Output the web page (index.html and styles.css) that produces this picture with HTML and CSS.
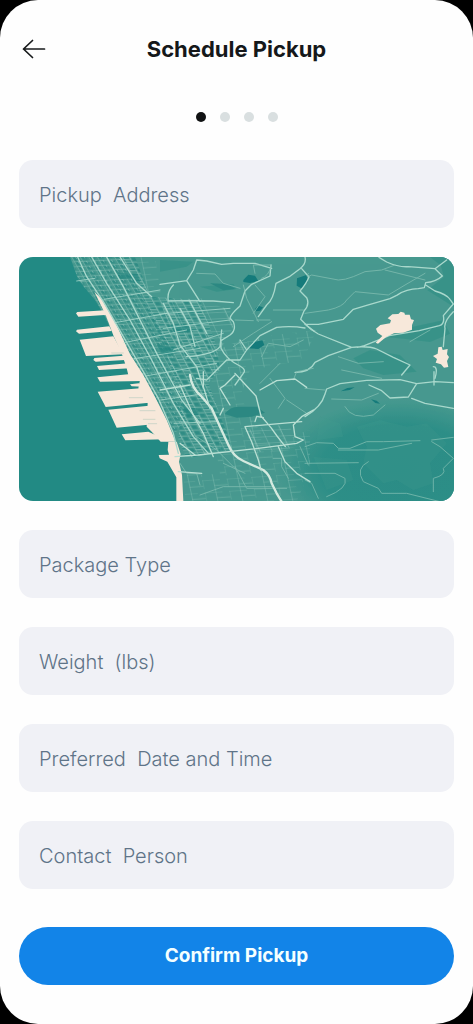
FILE: index.html
```html
<!DOCTYPE html>
<html lang="en">
<head>
<meta charset="utf-8">
<meta name="viewport" content="width=device-width, initial-scale=1">
<title>Schedule Pickup</title>
<link rel="stylesheet" href="styles.css">
</head>
<body>
<main class="screen">
  <header class="topbar">
    <button class="back" type="button" aria-label="Back">
      <svg viewBox="0 0 24 24" aria-hidden="true"><path d="M22.500 12H1.500M10.500 3.500 1.500 12l9 8.500"/></svg>
    </button>
    <h1 class="title">Schedule Pickup</h1>
  </header>
  <ol class="steps" aria-label="Step 1 of 4">
    <li class="step step-current"></li><li class="step"></li><li class="step"></li><li class="step"></li>
  </ol>
  <form class="form">
    <input class="field" type="text" aria-label="Pickup Address" placeholder="Pickup  Address">
    <svg class="map" viewBox="57 771 1305 732" role="img" aria-label="Pickup area map">
      <defs>
        <pattern id="dense" width="25" height="15" patternUnits="userSpaceOnUse" patternTransform="rotate(-3) skewX(27)">
          <path class="block" d="M4 3h14v8H4z"/><path class="lane" d="M0 0H25M0 0V15M13 0V7"/>
        </pattern>
        <pattern id="grid" width="43" height="17" patternUnits="userSpaceOnUse" patternTransform="rotate(-2) skewX(26)">
          <path class="block" d="M4 3h15v5H4zM25 4h14v10H25z"/><path class="lane" d="M0 0H43M0 0V17M22 0V17M0 9H20"/>
        </pattern>
        <pattern id="rows" width="90" height="19" patternUnits="userSpaceOnUse" patternTransform="rotate(-3) skewX(22)">
          <path class="lane" d="M0 0H90M0 0V19M55 0V19"/>
        </pattern>
        <pattern id="faint" width="74" height="37" patternUnits="userSpaceOnUse" patternTransform="rotate(-4) skewX(8)">
          <path class="faint-lane" d="M0 0H52M0 0V25M34 0V37M34 18H74"/>
        </pattern>
        <radialGradient id="shade" cx=".6" cy=".6" r=".55">
          <stop offset="0" stop-color="#2b8d86"/><stop offset=".65" stop-color="#2b8d86" stop-opacity=".9"/><stop offset="1" stop-color="#2b8d86" stop-opacity="0"/>
        </radialGradient>
      </defs>
      <path class="water" d="M57 771H1362V1503H57z"/>
      <path class="land" d="M210 771 235 840 285 900 315 950 365 1060 425 1130 465 1185 495 1255 530 1355 540 1415 545 1503H1362V771z"/>
      <!-- parks and hills -->
      <path class="hill" d="M480 815 560 800 580 785 480 780zM600 860l100-8 10 15-60 8zM1150 1010l60-24 120-25 20 40-60 25-80-10zM1060 1075l50-25 90 15 50 50-100 10-60-20zM1290 771h72v150l-80-50 50-40-10-35z"/>
      <ellipse fill="url(#shade)" cx="1130" cy="1370" rx="330" ry="190"/>
      <path class="ridge" d="M1070 1280l70-20 80 20 60-10 60 60-50 60 10 60-60 20-50-30-40 10-60-60 10-50zM940 1370l100 10 20 60-80 30zM960 1250l60 20 10 40-80 10z"/>
      <!-- street blocks -->
      <path fill="url(#dense)" d="M212 771H370L440 900 500 1000 535 1130 555 1260 525 1300 495 1235 425 1130 365 1060 315 950 285 900 235 840z"/>
      <path fill="url(#grid)" d="M365 771H405L450 890 600 900 650 1040 660 1110 625 1150 700 1350 560 1375 535 1320 545 1220 500 1060 430 900z"/>
      <path fill="url(#rows)" d="M480 900 610 895 620 905 690 930 700 980 665 1045 745 1010 735 1055 650 1070 540 1080zM735 1290l130-18 35 65-60 15-80 5z"/>
      <path fill="url(#faint)" d="M405 771h60l20 130-50-10zM640 1050l140-40 170-20-40 90-160 30-30 80 80 140 130-40 0 120-60 143H560l-10-130 110 0-30-190z"/>
      <path class="block" d="M352 820h58l8 15-62 2zM395 835l18-4 8 16-18 3zM510 975l60 3 8 18-55 4zM470 1035l50 5 10 20-45 5zM550 1220l40 5 8 20-35 5z"/>
      <!-- waterfront -->
      <g class="sand" transform="translate(45 750)">
        <path d="M238 125 260 148 302 220 345 312 385 375 420 440 455 510 482 575H437L410 545 395 530 398 460 384 440 370 415 375 390 340 375 335 355 320 310 297 261 287 235 272 195z"/>
        <path d="M272 181 187 186 183 190 190 200 280 194zM283 229 186 239 183 244 192 251 290 243zM295 259 194 269 213 318 325 313zM325 317 238 324 235 330 242 335 330 330zM340 340 246 348 252 360 345 355zM355 371 247 382 255 395 382 393zM372 400 345 403 350 409 385 410zM385 414 248 425 272 471 402 458zM402 467 280 479 305 533 400 524zM400 545 320 553 331 571 450 568z"/>
        <path d="M431 615 462 614 458 600 460 575 485 575 497 612 492 635 501 675 505 753H484V682L457 635 434 625z"/>
      </g>
      <g class="pier-detail" transform="translate(45 750)">
        <path d="M343 443h40M375 482h45M385 508h35M400 521h25M290 309h35"/>
      </g>
      <!-- lakes -->
      <g class="lake">
        <path d="M730 840l15-16 20 3 10 16-25 6-20-3zM745 1045l12-18 30-6 6 14-18 12zM765 927l10-10 14 5-8 10-14 2zM891 835l28-10 5 20-20 20-14-8zM1022 1174l20-10 22-2-15 8zM1113 1198l17 4 10 9-14-2z"/>
        <path class="pond" d="M630 850l55 2 20 15-35 4zM674 1242Q690 1220 715 1220L770 1220 795 1238 755 1250 710 1253z"/>
      </g>
      <!-- cross streets -->
      <path class="street" d="M230 843 285 835M312 898 480 870M345 968 500 940M372 1028 560 990M402 1076 600 1045M437 1128 650 1090M482 1200 620 1180M522 1270 650 1265M480 942 690 925M490 985 690 960M520 1050 670 1000"/>
      <!-- major roads -->
      <g class="road">
        <path d="M233 771 260 830 310 905 370 1010 430 1115 475 1195 520 1300 535 1360M275 771 320 850 390 960 455 1080 520 1210 580 1310 625 1360M320 771 370 860 425 970 470 1060 545 1200 600 1270M360 771 410 850 455 890M490 910 520 970 540 1035 590 1100 610 1165M570 905 620 1000M540 925 570 980 585 1040"/>
        <path d="M560 1070Q640 1065 660 1040L665 990M480 853 560 842 580 810 590 780 620 783 665 793 700 790 765 790 815 805M560 842 600 905M520 855Q500 875 505 903L560 902 640 903 700 908M813 795l-3 33-55 25-20 20-15 45Q690 945 690 955L700 965Q710 990 690 1005L663 1022 663 1045Q680 1080 720 1098 740 1110 730 1120L705 1155M720 1020l20 30 40-43 50-25q45-5 85 2M740 1050l-20 30-40 0-60 60-30-5"/>
        <path d="M915 771Q920 790 900 806L868 830 828 850Q820 900 800 915L775 950M905 806l22 25q-8 20-27 42l20 20q10 20-8 40l-10 25 20 20 20 15"/>
      </g>
      <g class="road" transform="translate(915 750)">
        <path d="M222 22 245 36Q280 52 310 50L390 56 425 30M390 56l22 22q-20 18-50 20l-4 15-18 3q-35 0-65 20l-20 10-70 20-40 12-30 30-75 15-40 0M362 105l28 18q35 10 45 25l10 14-30 35q5 25-12 30l-60 15-90 15-75 30-20 5M445 185q-30 30-25 50l-5 55M0 222q20 20 40 30l100 40q50-5 75 5l50 25 50 23-25 30M140 292l-70 25-40 20q-15 30-60 30M385 350q15 0 5 35"/>
        <path d="M0 500q50-30 60-68l5-15 40-16 80-10 100-2 50 12 55-6 55 3M235 405M192 405l38 17 25 22 55-3 25-40M320 445l40 15 85 15M387 365l0 40"/>
      </g>
      <g class="minor-road" transform="translate(915 750)">
        <path d="M10 70Q0 85 20 75L100 90Q120 90 145 80L180 65 230 60 270 45M0 190l70-10q45-10 55-30l25-25 100 10 50-30 60-35M240 60l120 30M315 275l60-35M100 320l60 20 75-5M110 360l120 25M0 415l60 5M80 447l90 3 50-20M120 470q20 40 85 25l35-30"/>
        <path d="M0 590l35-12 50 2 15 15 35 0 50-20 50 0 110-3M380 575l25 15 40 35-30 30q10 20-30 30l0 40M190 635q-40 20-15 60l45 20 10 15 75 0 100 25M0 640l160-2M0 690l20 10 20 45M0 670l90 0 30 15q10 30-55 55M100 600l120 0 100-20M380 570l65-8"/>
      </g>
      <g class="minor-road" transform="translate(480 750)">
        <path d="M110 70 165 72 190 100 240 115M285 70l-5-25 55 0q-10 35-30 40M250 105l10 40 35 70M285 105l30 35-35 50M225 210l55 2M340 180l90 0M220 290l60-40 55-35M430 270l-40 20-65-10-20 40M400 390l10-25 50-10M300 400l60-60M290 210l40 0"/>
        <path d="M110 560l60 40 60 60M190 640l65 30M60 640l20 30 30 0 10 35M120 735l70-25 150 0M340 625l25 0 0 25 20 35M330 385l45 60-20 30M380 450l60 40M225 650l35 65 120 0M420 590l25 55"/>
      </g>
      <!-- highways -->
      <g class="highway" transform="translate(480 1125)">
        <path d="M90 0Q95 40 125 65L155 100 180 155 205 210Q220 245 250 258L310 285Q330 300 335 325L350 355 365 380"/>
        <path d="M130-10l0 45 20 65M225-5l35 38 28 30 15 60 30 35 18 25 25 32M460 105l-35 20-25 25 5 35 25 10-20 10-115 15-180 20-70 5M355 215l20 45 35 35 40 25M255 155l20 45 20 55 8 30M190 100l-10 20M285 140l5-16 20 4M255 155l170-15"/>
        <path d="M225 0l-30 30-15 10 30 50M300 45l50-28 55-5 35 25M60 205l45 35M55 290l70 5M0 45l90-15M60 30l40 90 30 55 30 70"/>
      </g>
      <!-- sand lakes in the hills -->
      <g class="sand" transform="translate(915 750)">
        <path d="M212 278 232 258 218 248 213 236 226 225 255 220 258 211 248 205 262 193 280 192 287 185 298 188 300 194 314 194 318 208 327 210 321 225 321 239 294 248 267 250 243 261 219 281z"/>
        <path d="M400 292l10-2 3 10 15-3-2 16 6 8-6 12 4 18-13 2-9-10-16-5 4-11-12-9 14-7z"/>
      </g>
    </svg>
    <input class="field" type="text" aria-label="Package Type" placeholder="Package Type">
    <input class="field" type="text" aria-label="Weight (lbs)" placeholder="Weight  (lbs)">
    <input class="field" type="text" aria-label="Preferred Date and Time" placeholder="Preferred  Date and Time">
    <input class="field" type="text" aria-label="Contact Person" placeholder="Contact  Person">
    <button class="confirm" type="submit">Confirm Pickup</button>
  </form>
</main>
</body>
</html>
```

FILE: styles.css
```css
* { box-sizing: border-box; }
body {
  margin: 0;
  background: #000;
  font-family: Inter, "Liberation Sans", sans-serif;
}
.screen {
  min-height: 100vh;
  padding: 28px 19px 38px;
  background: #fefefe;
  border-radius: 38px;
}
.topbar {
  display: grid;
  grid-template-columns: 40px 1fr 40px;
  align-items: center;
  height: 42px;
}
.back {
  display: flex;
  padding: 0 3px;
  border: 0;
  background: none;
  cursor: pointer;
}
.back svg {
  width: 24px;
  height: 24px;
  fill: none;
  stroke: #171a1b;
  stroke-width: 1.7;
  stroke-linecap: round;
  stroke-linejoin: round;
}
.title {
  margin: 0;
  color: #15181a;
  font-size: 22px;
  font-weight: 700;
  line-height: 28px;
  text-align: center;
}
.steps {
  display: flex;
  justify-content: center;
  gap: 14px;
  margin: 42px 0 38px;
  padding: 0;
  list-style: none;
}
.step {
  width: 10px;
  height: 10px;
  border-radius: 50%;
  background: #d9dfe0;
}
.step-current { background: #101213; }
.form {
  display: flex;
  flex-direction: column;
  gap: 29px;
}
.field {
  width: 100%;
  height: 68px;
  padding: 2px 20px 0;
  border: 0;
  border-radius: 14px;
  background: #f0f1f6;
  color: #34404d;
  font: 300 20px/28px Inter, "Liberation Sans", sans-serif;
}
.field::placeholder { color: #5f7488; opacity: 1; }
.confirm {
  height: 58px;
  margin-top: 9px;
  border: 0;
  border-radius: 29px;
  background: #1284e8;
  color: #f4ffff;
  font: 700 19px/28px Inter, "Liberation Sans", sans-serif;
  cursor: pointer;
}
.map {
  display: block;
  width: 100%;
  border-radius: 14px;
  fill: none;
  stroke-linejoin: round;
  stroke-linecap: round;
}
.water { fill: #228a84; }
.land { fill: #47998f; }
.hill { fill: #318e86; opacity: .6; }
.ridge { fill: #439a90; opacity: .25; }
.block { fill: #238680; opacity: .65; }
.lane { stroke: #a5d0c5; stroke-width: 2; opacity: .75; }
.faint-lane { stroke: #a5d0c5; stroke-width: 2; opacity: .4; }
.sand { fill: #f7e8da; }
.pier-detail { stroke: #bccdc0; stroke-width: 2; }
.lake { fill: #167b7b; }
.pond { fill: #2d8982; }
.street { stroke: #a9d8cc; stroke-width: 3; opacity: .8; }
.road { stroke: #a9d8cc; stroke-width: 4; }
.minor-road { stroke: #83bfb2; stroke-width: 3; opacity: .75; }
.highway { stroke: #b9dfd3; stroke-width: 4; }
.highway path:first-child { stroke: #d4eadf; stroke-width: 7; }
```
